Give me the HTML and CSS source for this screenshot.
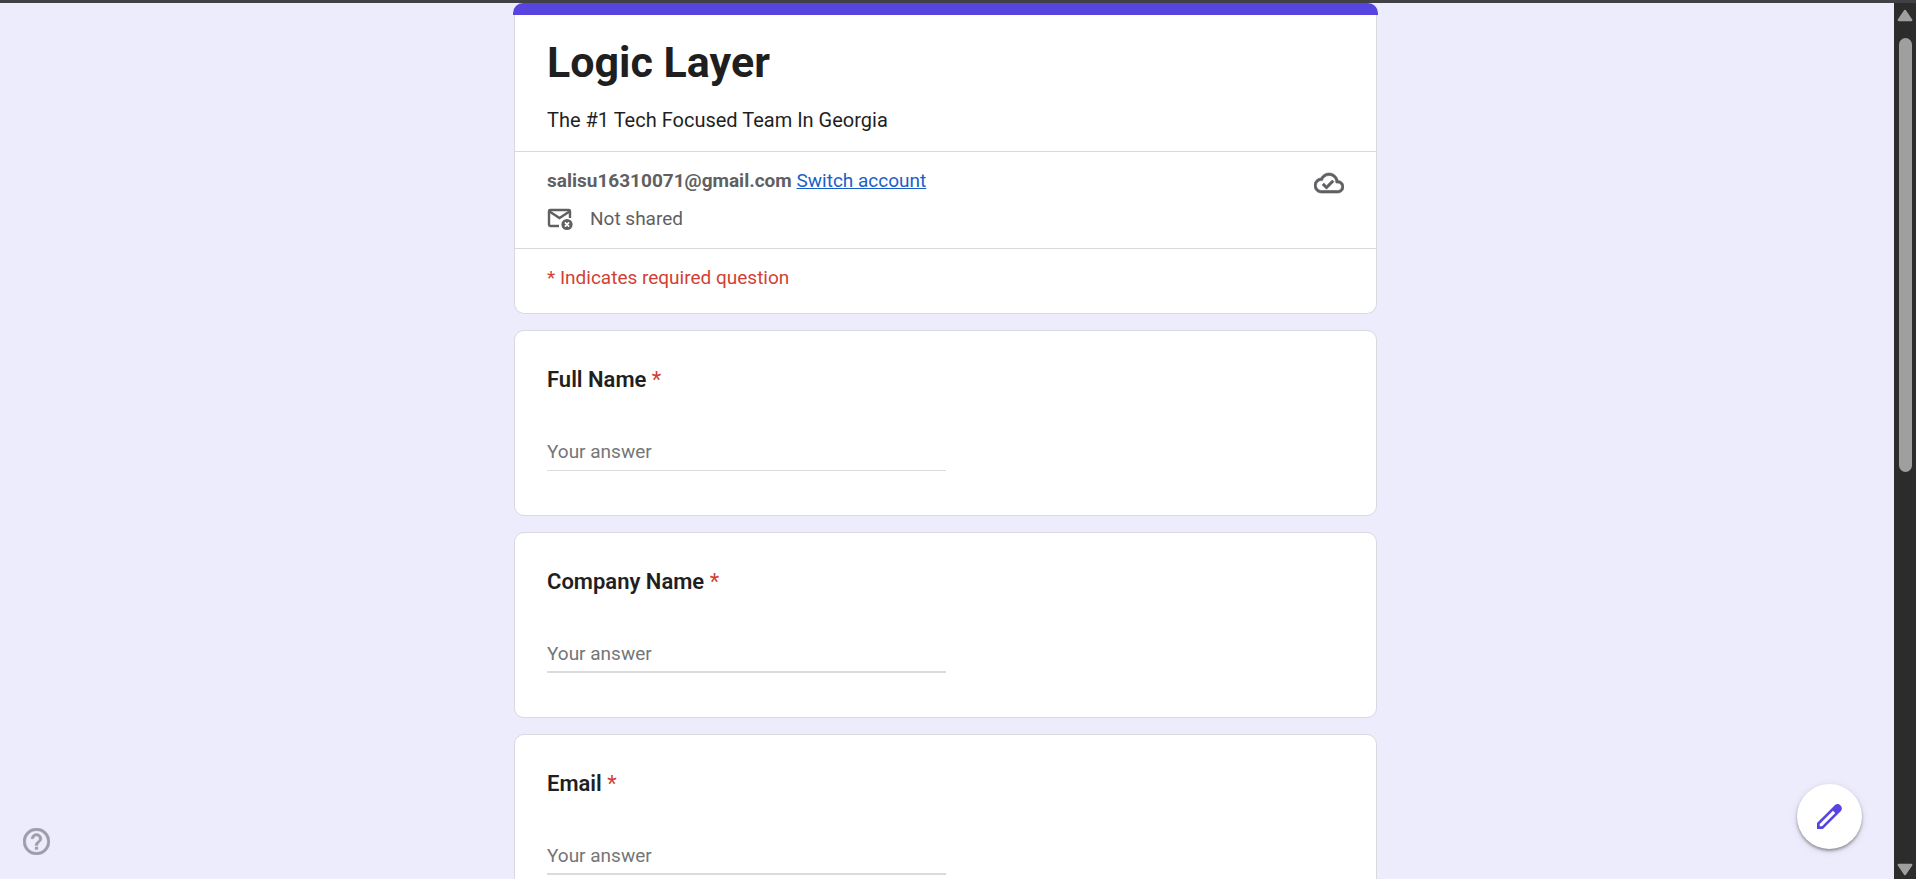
FILE: index.html
```html
<!DOCTYPE html>
<html lang="en">
<head>
<meta charset="utf-8">
<title>Logic Layer</title>
<link rel="stylesheet" href="styles.css">
</head>
<body>
<div class="viewport">
  <main class="page">
    <form class="form">
      <section class="card intro">
        <div class="accent"></div>
        <header class="intro-head">
          <h1 class="title">Logic Layer</h1>
          <p class="description">The #1 Tech Focused Team In Georgia</p>
        </header>
        <div class="account">
          <div class="account-info">
            <p class="account-line"><strong>salisu16310071@gmail.com</strong> <a class="link" href="#">Switch account</a></p>
            <p class="shared">
              <svg class="icon-mail" viewBox="0 0 26 24" aria-hidden="true">
                <path d="M12 19H3.200Q2 19 2 17.800V4.200Q2 3 3.200 3H21.800Q23 3 23 4.200V11" fill="none" stroke="currentColor" stroke-width="2.400"/>
                <path d="M2.500 4.500L12.500 11L22.500 4.500" fill="none" stroke="currentColor" stroke-width="2.400"/>
                <circle cx="20" cy="17.500" r="5.600" fill="currentColor"/>
                <path d="M17.900 15.400l4.200 4.200M22.100 15.400l-4.200 4.200" stroke="#fff" stroke-width="1.600"/>
              </svg>
              <span>Not shared</span>
            </p>
          </div>
          <svg class="icon-cloud" viewBox="0 0 24 24" role="img" aria-label="Draft saved">
            <path fill="currentColor" stroke="currentColor" stroke-width=".5" d="M19.350 10.040C18.670 6.590 15.640 4 12 4 9.110 4 6.600 5.640 5.350 8.040 2.340 8.360 0 10.910 0 14c0 3.310 2.690 6 6 6h13c2.760 0 5-2.240 5-5 0-2.640-2.050-4.780-4.650-4.960zM19 18H6c-2.210 0-4-1.790-4-4s1.790-4 4-4h.71C7.370 7.690 9.480 6 12 6c3.040 0 5.500 2.460 5.500 5.500v.5H19c1.660 0 3 1.340 3 3s-1.340 3-3 3zm-9-3.820l-2.090-2.090L6.500 13.500 10 17l6.010-6.010-1.410-1.410z"/>
          </svg>
        </div>
        <p class="required-note">* Indicates required question</p>
      </section>

      <section class="card question">
        <label class="label" for="full-name">Full Name <span class="star">*</span></label>
        <input class="answer" id="full-name" type="text" placeholder="Your answer" required>
      </section>
      <section class="card question">
        <label class="label" for="company">Company Name <span class="star">*</span></label>
        <input class="answer" id="company" type="text" placeholder="Your answer" required>
      </section>
      <section class="card question">
        <label class="label" for="email">Email <span class="star">*</span></label>
        <input class="answer" id="email" type="text" placeholder="Your answer" required>
      </section>
    </form>
  </main>
  <div class="scrollbar" aria-hidden="true">
    <svg class="arrow" viewBox="0 0 14 11"><path d="M7 1.500L12.500 9.500H1.500Z"/></svg>
    <div class="track"><div class="thumb"></div></div>
    <svg class="arrow" viewBox="0 0 14 11"><path d="M7 9.500L12.500 1.500H1.500Z"/></svg>
  </div>
</div>

<button class="help" type="button" aria-label="Help">
  <svg viewBox="2 2 20 20" aria-hidden="true"><path fill="currentColor" stroke="currentColor" stroke-width=".3" d="M11 18h2v-2h-2v2zm1-16C6.480 2 2 6.480 2 12s4.480 10 10 10 10-4.480 10-10S17.520 2 12 2zm0 18c-4.410 0-8-3.590-8-8s3.590-8 8-8 8 3.590 8 8-3.590 8-8 8zm0-14c-2.210 0-4 1.790-4 4h2c0-1.100.9-2 2-2s2 .9 2 2c0 2-3 1.750-3 5h2c0-2.250 3-2.500 3-5 0-2.210-1.790-4-4-4z"/></svg>
</button>
<button class="edit" type="button" aria-label="Edit this form">
  <svg viewBox="0 0 24 24" aria-hidden="true">
    <path fill="currentColor" fill-rule="evenodd" d="M0 24V18.300L17.300 1Q20-1 22.600 1.400Q25 4 23 6.700L5.700 24ZM2.600 21.400H4.800L17.500 8.700L15.300 6.500L2.600 19.200Z"/>
  </svg>
</button>
</body>
</html>
```

FILE: styles.css
```css
* {
  box-sizing: border-box;
}

body {
  margin: 0;
  height: 100vh;
  overflow: hidden;
  border-top: 3px solid #414145;
  background: #edecfc;
  color: #1f1f1f;
  font-family: Roboto, "Liberation Sans", sans-serif;
}

h1,
p {
  margin: 0;
}

.viewport {
  display: flex;
  height: 100%;
}

.page {
  flex: 1;
  padding-right: 3px;
  overflow: hidden;
}

.form {
  display: flex;
  flex-direction: column;
  gap: 16px;
  max-width: 863px;
  margin: 0 auto;
}

.card {
  border: 1px solid #d8d9de;
  border-radius: 10px;
  background: #fff;
}

.intro {
  border-top: 0;
}

.accent {
  height: 12px;
  margin: 0 -2px;
  border-radius: 10px 10px 0 0;
  background: #5845e0;
}

.intro-head {
  padding: 20px 32px 17px;
}

.title {
  font-size: 43px;
  line-height: 54px;
  font-weight: 700;
}

.description {
  padding-top: 17px;
  font-size: 20px;
  line-height: 28px;
}

.account {
  display: flex;
  justify-content: space-between;
  align-items: flex-start;
  padding: 15px 32px 16px;
  border-top: 1px solid #d8d9da;
  border-bottom: 1px solid #d8d9da;
  color: #5f6062;
  font-size: 19px;
  line-height: 27px;
}

.link {
  color: #1a5fc8;
  text-decoration: underline;
}

.shared {
  display: flex;
  align-items: center;
  gap: 17px;
  padding-top: 11px;
}

.icon-mail {
  width: 26px;
  height: 24px;
}

.icon-cloud {
  width: 30px;
  height: 32px;
}

.required-note {
  padding: 15px 32px 22px;
  color: #d23f34;
  font-size: 19px;
  line-height: 27px;
}

.question {
  display: flex;
  flex-direction: column;
  align-items: flex-start;
  gap: 39px;
  padding: 33px 32px 44px;
}

.label {
  font-size: 22px;
  line-height: 32px;
  font-weight: 600;
}

.star {
  color: #d23f34;
  font-weight: 400;
}

.answer {
  width: 50%;
  height: 36px;
  padding: 0 0 2px;
  border: 0;
  border-bottom: 1px solid #dadbdc;
  background: transparent;
  color: #1f1f1f;
  font: 19px Roboto, "Liberation Sans", sans-serif;
}

.question + .question .answer {
  border-bottom-width: 2px;
}

.answer::placeholder {
  color: #757677;
}

.scrollbar {
  display: flex;
  flex-direction: column;
  align-items: center;
  width: 22px;
  padding: 6px 0 3px;
  background: #2c2c2c;
}

.arrow {
  width: 16px;
  height: 13px;
  fill: #9f9f9f;
  stroke: #9f9f9f;
  stroke-width: 2;
  stroke-linejoin: round;
}

.track {
  flex: 1;
  padding: 16px 0 6px;
}

.thumb {
  width: 13px;
  height: 53%;
  border-radius: 7px;
  background: #9f9f9f;
}

.help,
.edit {
  position: absolute;
  display: flex;
  padding: 0;
  border: 0;
  cursor: pointer;
}

.help {
  left: 23px;
  bottom: 24px;
  background: transparent;
  color: #9e9da9;
}

.help svg {
  width: 27px;
  height: 27px;
}

.edit {
  right: 54px;
  bottom: 30px;
  align-items: center;
  justify-content: center;
  width: 65px;
  height: 65px;
  border-radius: 50%;
  background: #fff;
  box-shadow: 0 2px 3px rgba(0, 0, 0, 0.35), 0 2px 8px rgba(0, 0, 0, 0.1);
  color: #5845e0;
}

.edit svg {
  width: 25px;
  height: 25px;
  overflow: visible;
}
```
